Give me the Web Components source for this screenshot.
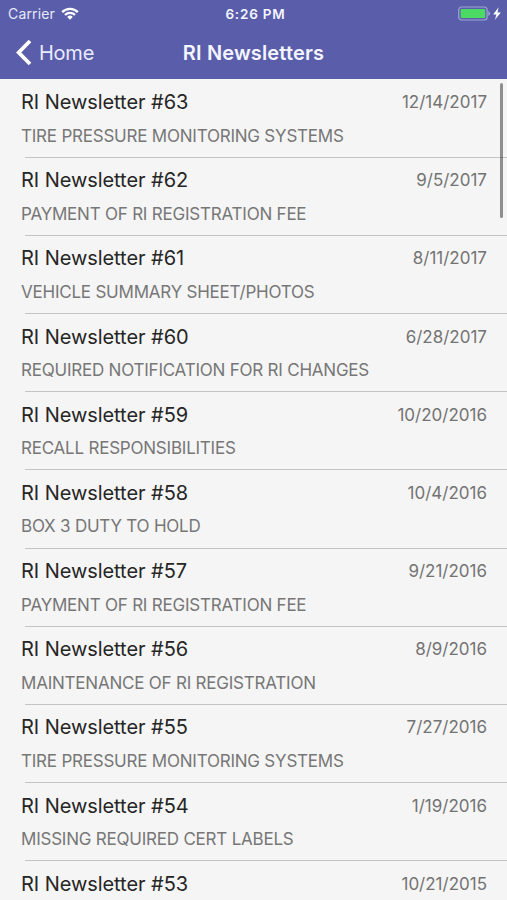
<!DOCTYPE html>
<html lang="en">
<head>
<meta charset="utf-8">
<title>RI Newsletters</title>
<style>
html, body{
  height: 100%;
}
body{
  margin: 0;
  overflow: hidden;
  background: #f5f5f5;
  font-family: Inter, "Liberation Sans", sans-serif;
}
</style>
</head>
<body>
<news-screen>
  <status-bar slot="top" carrier="Carrier" time="6:26 PM"></status-bar>
  <nav-bar slot="top" back="Home">RI Newsletters</nav-bar>
  <newsletter-row date="12/14/2017">RI Newsletter #63<span slot="subject">TIRE PRESSURE MONITORING SYSTEMS</span></newsletter-row>
  <newsletter-row date="9/5/2017">RI Newsletter #62<span slot="subject">PAYMENT OF RI REGISTRATION FEE</span></newsletter-row>
  <newsletter-row date="8/11/2017">RI Newsletter #61<span slot="subject">VEHICLE SUMMARY SHEET/PHOTOS</span></newsletter-row>
  <newsletter-row date="6/28/2017">RI Newsletter #60<span slot="subject">REQUIRED NOTIFICATION FOR RI CHANGES</span></newsletter-row>
  <newsletter-row date="10/20/2016">RI Newsletter #59<span slot="subject">RECALL RESPONSIBILITIES</span></newsletter-row>
  <newsletter-row date="10/4/2016">RI Newsletter #58<span slot="subject">BOX 3 DUTY TO HOLD</span></newsletter-row>
  <newsletter-row date="9/21/2016">RI Newsletter #57<span slot="subject">PAYMENT OF RI REGISTRATION FEE</span></newsletter-row>
  <newsletter-row date="8/9/2016">RI Newsletter #56<span slot="subject">MAINTENANCE OF RI REGISTRATION</span></newsletter-row>
  <newsletter-row date="7/27/2016">RI Newsletter #55<span slot="subject">TIRE PRESSURE MONITORING SYSTEMS</span></newsletter-row>
  <newsletter-row date="1/19/2016">RI Newsletter #54<span slot="subject">MISSING REQUIRED CERT LABELS</span></newsletter-row>
  <newsletter-row date="10/21/2015">RI Newsletter #53</newsletter-row>
</news-screen>

<script>
const screen_template = document.createElement('template');
screen_template.innerHTML = `
<style>
:host{
  display: flex;
  flex-direction: column;
  height: 100vh;
  overflow: hidden;
}
header{
  flex: none;
  height: 79px;
  background: #5a5eaa;
  color: #f4f5ff;
}
main{
  position: relative;
  flex: 1;
  min-height: 0;
  padding-top: .6px;
  overflow: hidden;
}
#thumb{
  position: absolute;
  top: 4px;
  right: 4px;
  width: 3px;
  height: 135px;
  border-radius: 2px;
  background: rgba(0, 0, 0, .42);
}
</style>
<header><slot name="top"></slot></header>
<main>
  <slot></slot>
  <div id="thumb"></div>
</main>`

const status_template = document.createElement('template');
status_template.innerHTML = `
<style>
:host{
  display: grid;
  grid-template-columns: 1fr auto 1fr;
  align-items: center;
  height: 27px;
  padding: 0 6px 0 8px;
  box-sizing: border-box;
}
div{
  display: flex;
  align-items: center;
}
#carrier{
  font-size: 14px;
  letter-spacing: .15px;
  color: #e6e8fb;
}
#time{
  font-size: 13.5px;
  font-weight: 600;
  letter-spacing: .8px;
  padding-left: 2px;
}
#wifi{
  margin-left: 6px;
}
#power{
  justify-content: flex-end;
}
svg{
  display: block;
}
</style>
<div>
  <span id="carrier"></span>
  <svg id="wifi" width="18" height="13" viewBox="0 0 18 13">
    <g fill="none" stroke="#fff" stroke-width="2.3">
      <path d="M1.2 5.1a11 11 0 0 1 15.6 0"/>
      <path d="M4 8a7 7 0 0 1 10 0"/>
    </g>
    <path fill="#fff" d="M9 12.8 6.2 9.9a4 4 0 0 1 5.6 0z"/>
  </svg>
</div>
<span id="time"></span>
<div id="power">
  <svg width="43" height="15" viewBox="0 0 43 15">
    <rect x=".7" y="1" width="28.4" height="13" rx="3" fill="none" stroke="#9ca6d2" stroke-width="1.2"/>
    <rect x="2.6" y="2.9" width="24.6" height="9.2" rx="1" fill="#4cd964"/>
    <path fill="#9ca6d2" d="M30.3 5.1q1.8.8 1.8 2.4t-1.8 2.4z"/>
    <path fill="#fff" d="M40.6 1.2 35.2 8.5h3.2l-1.4 5.3 5.8-7.3h-3.3z"/>
  </svg>
</div>`

const nav_template = document.createElement('template');
nav_template.innerHTML = `
<style>
:host{
  display: grid;
  grid-template-columns: 1fr auto 1fr;
  align-items: center;
  height: 51px;
  padding: 0 16px;
  box-sizing: border-box;
}
#back{
  display: flex;
  align-items: center;
  gap: 7px;
  font-size: 20px;
  letter-spacing: -.25px;
  color: #e9ebff;
}
h1{
  margin: 0;
  font-size: 20px;
  font-weight: 600;
  letter-spacing: .15px;
}
</style>
<div id="back">
  <svg width="16" height="27" viewBox="0 0 16 27">
    <path d="M14 2 2.7 13.5 14 25" fill="none" stroke="#fff" stroke-width="3.8"/>
  </svg>
  <span id="label"></span>
</div>
<h1><slot></slot></h1>`

const row_template = document.createElement('template');
row_template.innerHTML = `
<style>
:host{
  display: block;
  height: 78.17px;
  padding-left: 21px;
  box-sizing: border-box;
}
#line{
  display: flex;
  justify-content: space-between;
  align-items: center;
  height: 45px;
  padding-right: 20px;
}
#title{
  font-size: 20px;
  letter-spacing: -.06px;
  color: #262626;
}
#date{
  font-size: 17px;
  color: #737373;
}
#subject{
  height: 32.17px;
  margin-left: 4px;
  border-bottom: 1px solid #c4c4c4;
  font-size: 17px;
  letter-spacing: -.22px;
  line-height: 23.4px;
  color: #777;
  text-indent: -4px;
  white-space: nowrap;
}
</style>
<div id="line">
  <span id="title"><slot></slot></span>
  <span id="date"></span>
</div>
<div id="subject"><slot name="subject"></slot></div>`

class shadowElement extends HTMLElement{
  constructor(template){
    super();
    this.attachShadow({mode:"open"});
    this.shadowRoot.appendChild(template.content.cloneNode(true));
  }
  // copies an attribute into the shadow node with the given id
  fill(id, attribute){
    this.shadowRoot.getElementById(id).textContent = this.getAttribute(attribute);
  }
}

class newsScreen extends shadowElement{
  constructor(){
    super(screen_template);
  }
}

class statusBar extends shadowElement{
  constructor(){
    super(status_template);
    this.fill("carrier", "carrier");
    this.fill("time", "time");
  }
}

class navBar extends shadowElement{
  constructor(){
    super(nav_template);
    this.fill("label", "back");
  }
}

class newsletterRow extends shadowElement{
  constructor(){
    super(row_template);
    this.fill("date", "date");
  }
}

customElements.define("news-screen", newsScreen);
customElements.define("status-bar", statusBar);
customElements.define("nav-bar", navBar);
customElements.define("newsletter-row", newsletterRow);
</script>
</body>
</html>
